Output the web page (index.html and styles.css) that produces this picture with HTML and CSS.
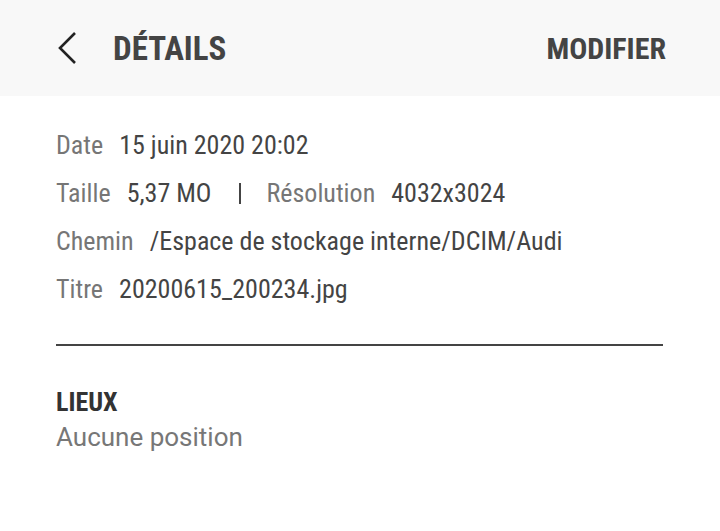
FILE: index.html
```html
<!DOCTYPE html>
<html lang="fr">
<head>
<meta charset="utf-8">
<title>Détails</title>
<link rel="stylesheet" href="styles.css">
</head>
<body>
<header class="topbar">
  <div class="left">
    <svg class="back" width="22" height="34" viewBox="0 0 22 34"><path d="M19 2 L4 17 L19 32" fill="none" stroke="#222" stroke-width="2.6"/></svg>
    <h1 class="title">DÉTAILS</h1>
  </div>
  <div class="action">MODIFIER</div>
</header>
<main class="content">
  <div class="row"><span class="label">Date</span><span class="value">15 juin 2020 20:02</span></div>
  <div class="row"><span class="label">Taille</span><span class="value">5,37 MO</span><span class="sep"></span><span class="label">Résolution</span><span class="value">4032x3024</span></div>
  <div class="row"><span class="label">Chemin</span><span class="value">/Espace de stockage interne/DCIM/Audi</span></div>
  <div class="row"><span class="label">Titre</span><span class="value">20200615_200234.jpg</span></div>
  <hr class="divider">
  <div class="section">
    <div class="section-title">LIEUX</div>
    <div class="section-text">Aucune position</div>
  </div>
</main>
</body>
</html>
```
FILE: styles.css
```css
* { box-sizing: border-box; }
html, body { margin: 0; padding: 0; background: #fff; }
body {
  width: 720px;
  height: 531px;
  overflow: hidden;
  font-family: "Roboto Condensed", "Liberation Sans Narrow", Roboto, sans-serif;
  font-stretch: condensed;
}
.topbar {
  height: 96px;
  background: #f8f8f8;
  display: flex;
  align-items: center;
  justify-content: space-between;
  padding: 0 54px 0 56px;
}
.left { display: flex; align-items: center; }
.back { display: block; margin-right: 35px; }
.title {
  margin: 0;
  font-size: 33px;
  font-weight: 700;
  color: #444;
}
.action {
  font-size: 30px;
  font-weight: 700;
  color: #444;
}
.content { padding: 25px 56px 0 56px; }
.row {
  height: 48px;
  display: flex;
  align-items: center;
  font-size: 26px;
}
.label { color: #767676; margin-right: 16px; }
.value { color: #444; }
.sep {
  width: 2px;
  height: 21px;
  background: #444;
  margin: 0 26px 0 27px;
}
.divider {
  border: 0;
  height: 2px;
  background: #444;
  margin: 31px 0 0 0;
  width: 607px;
}
.section { padding-top: 40px; }
.section-title { font-size: 26px; font-weight: 700; color: #333; line-height: 32px; }
.section-text {
  font-family: Roboto, sans-serif;
  font-stretch: normal;
  font-size: 26px;
  color: #777;
  line-height: 38px;
}
```
